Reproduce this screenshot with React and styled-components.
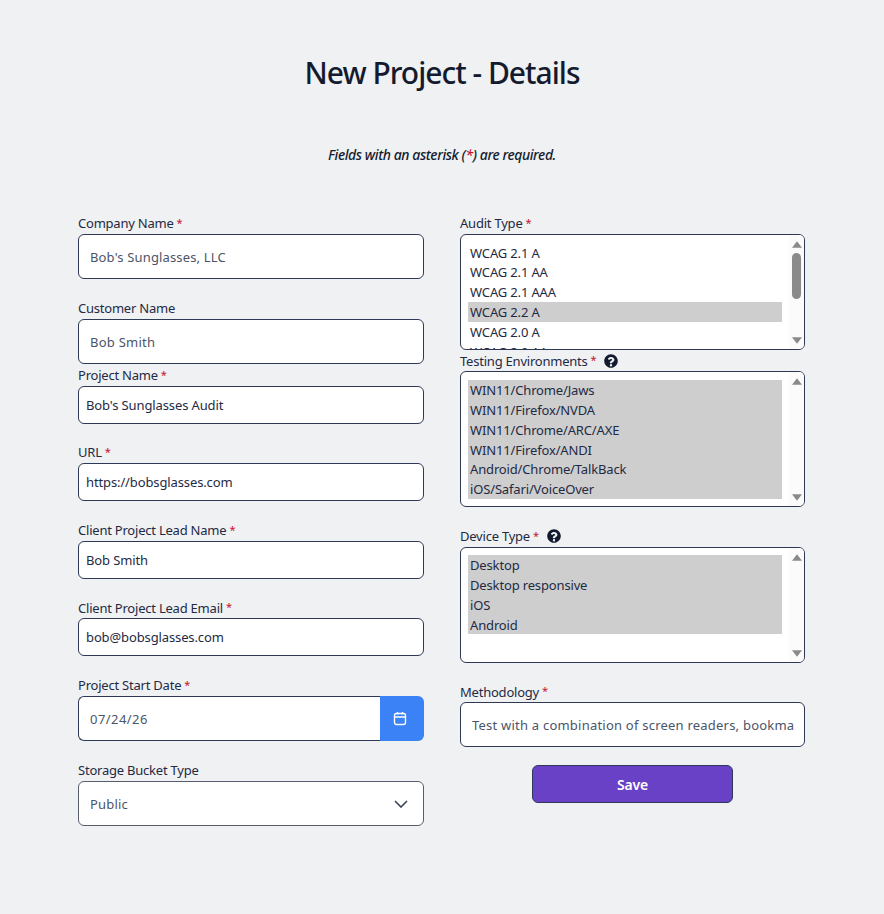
import React from "react";
import styled, { createGlobalStyle } from "styled-components";

const Global = createGlobalStyle`
  html, body { margin: 0; padding: 0; background: #eff1f3; }
  body { font-family: "Noto Sans", "Open Sans", sans-serif; color: #1f2a44; }
`;

const Page = styled.main`
  width: 884px;
  height: 914px;
  box-sizing: border-box;
  padding-top: 54px;
  overflow: hidden;
`;

const Title = styled.h1`
  margin: 0;
  text-align: center;
  font-size: 30px;
  line-height: 38px;
  font-weight: 500;
  letter-spacing: -1px;
  color: #141b2f;
`;

const Note = styled.p`
  margin: 52px 0 0;
  text-align: center;
  font-size: 14px;
  line-height: 22px;
  font-style: italic;
  font-weight: 500;
  letter-spacing: -0.42px;
  color: #141b2f;
`;

const Star = styled.span`
  color: #c8102e;
`;

const Mark = styled.span`
  color: #c8102e;
  font-size: 11px;
  margin-left: 3px;
  padding-bottom: 2px;
`;

const Form = styled.form`
  display: grid;
  grid-template-columns: 346px 345px;
  column-gap: 36px;
  padding: 46px 0 0 78px;
`;

const Column = styled.div`
  display: flex;
  flex-direction: column;
`;

const Field = styled.div`
  display: flex;
  flex-direction: column;
  margin-bottom: ${(p) => p.$after ?? 0}px;
`;

const Label = styled.label`
  display: flex;
  align-items: center;
  height: ${(p) => p.$h ?? 22}px;
  font-size: 13px;
  letter-spacing: -0.22px;
  color: #1f2a44;
`;

const Help = styled.svg`
  width: 14px;
  height: 14px;
  margin-left: 8px;
`;

const Input = styled.div`
  box-sizing: border-box;
  height: ${(p) => p.$h}px;
  display: flex;
  align-items: center;
  background: #fff;
  border: 1px solid #2e3a55;
  border-radius: 6px;
  padding: 0 ${(p) => p.$px ?? 11}px;
  font-size: 13px;
  letter-spacing: ${(p) => p.$ls ?? "-0.12px"};
  color: ${(p) => p.$color ?? "#1f2a44"};
  white-space: nowrap;
  overflow: hidden;
`;

const DateWrap = styled.div`
  display: flex;
  height: 45px;
`;

const DateInput = styled(Input)`
  flex: 1;
  border-radius: 6px 0 0 6px;
  border-right: 0;
`;

const DateBtn = styled.div`
  box-sizing: border-box;
  width: 44px;
  padding-right: 4px;
  display: flex;
  align-items: center;
  justify-content: center;
  background: #3b82f6;
  border-radius: 0 6px 6px 0;
`;

const SelectBox = styled(Input)`
  justify-content: space-between;
  border-color: #565d6d;
  padding-right: 15px;
`;

const ListBox = styled.div`
  box-sizing: border-box;
  height: ${(p) => p.$h}px;
  display: flex;
  background: #fff;
  border: 1px solid #2e3a55;
  border-radius: 6px;
  overflow: hidden;
`;

const Options = styled.div`
  flex: 1;
  padding: ${(p) => p.$pt}px 7px 0 7px;
  overflow: hidden;
`;

const Option = styled.div`
  height: 19.85px;
  line-height: 21px;
  padding-left: 2px;
  font-size: 13px;
  letter-spacing: -0.15px;
  white-space: nowrap;
  color: #1f2a44;
  background: ${(p) => (p.$sel ? "#cecece" : "transparent")};
`;

const Bar = styled.div`
  width: 15px;
  background: #fbfbfb;
  display: flex;
  flex-direction: column;
  align-items: center;
  justify-content: space-between;
  padding: 6px 0 5px;
  box-sizing: border-box;
  position: relative;
`;

const Thumb = styled.div`
  position: absolute;
  top: 18px;
  left: 3px;
  width: 9px;
  height: 46px;
  border-radius: 5px;
  background: #8a8a8a;
`;

const Arrow = styled.svg`
  width: 10px;
  height: 7px;
  fill: #8a8a8a;
`;

const Save = styled.button`
  display: block;
  width: 201px;
  height: 38px;
  margin: 18px 0 0 72px;
  background: #6941c6;
  border: 1px solid #2e3a55;
  border-radius: 6px;
  color: #fff;
  font: 600 14px "Noto Sans", sans-serif;
  letter-spacing: -0.2px;
`;

const Scroll = ({ thumb }) => (
  <Bar>
    <Arrow viewBox="0 0 11 7"><path d="M5.5 0 11 7H0z" /></Arrow>
    {thumb && <Thumb />}
    <Arrow viewBox="0 0 11 7"><path d="M0 0h11L5.5 7z" /></Arrow>
  </Bar>
);

const QuestionIcon = () => (
  <Help viewBox="0 0 512 512" fill="#111a2e">
    <path d="M256 8C119 8 8 119 8 256s111 248 248 248 248-111 248-248S393 8 256 8zm0 448a44 44 0 1 1 0-88 44 44 0 0 1 0 88zm42-139v5c0 7-5 12-12 12h-60c-7 0-12-5-12-12v-9c0-40 30-56 53-69 20-11 32-18 32-33 0-19-25-32-45-32-26 0-38 13-55 34-4 5-12 6-17 2l-36-28c-5-4-6-11-3-16 28-42 64-65 119-65 58 0 120 45 120 105 0 79-84 80-84 106z" />
  </Help>
);

const Req = () => <Mark>*</Mark>;

const audit = [
  ["WCAG 2.1 A"],
  ["WCAG 2.1 AA"],
  ["WCAG 2.1 AAA"],
  ["WCAG 2.2 A", true],
  ["WCAG 2.0 A"],
  ["WCAG 2.0 AA"],
];
const envs = [
  "WIN11/Chrome/Jaws",
  "WIN11/Firefox/NVDA",
  "WIN11/Chrome/ARC/AXE",
  "WIN11/Firefox/ANDI",
  "Android/Chrome/TalkBack",
  "iOS/Safari/VoiceOver",
];
const devices = ["Desktop", "Desktop responsive", "iOS", "Android"];

export default function App() {
  return (
    <Page>
      <Global />
      <Title>New Project - Details</Title>
      <Note>
        Fields with an asterisk (<Star>*</Star>) are required.
      </Note>
      <Form>
        <Column>
          <Field $after={18}>
            <Label>Company Name<Req /></Label>
            <Input $h={45} $color="#4b5568" $ls="0.15px">Bob's Sunglasses, LLC</Input>
          </Field>
          <Field $after={0}>
            <Label>Customer Name</Label>
            <Input $h={45} $color="#4b5568" $ls="0.25px">Bob Smith</Input>
          </Field>
          <Field $after={17}>
            <Label>Project Name<Req /></Label>
            <Input $h={38} $px={7}>Bob's Sunglasses Audit</Input>
          </Field>
          <Field $after={18}>
            <Label>URL<Req /></Label>
            <Input $h={38} $px={7}>https://bobsglasses.com</Input>
          </Field>
          <Field $after={18}>
            <Label>Client Project Lead Name<Req /></Label>
            <Input $h={38} $px={7}>Bob Smith</Input>
          </Field>
          <Field $after={18}>
            <Label $h={21}>Client Project Lead Email<Req /></Label>
            <Input $h={38} $px={7}>bob@bobsglasses.com</Input>
          </Field>
          <Field $after={18}>
            <Label>Project Start Date<Req /></Label>
            <DateWrap>
              <DateInput $h={45} $color="#4b5568" $ls="0.45px">07/24/26</DateInput>
              <DateBtn>
                <svg width="14" height="15" viewBox="0 0 14 15" fill="none" stroke="#fff" strokeWidth="1.4">
                  <rect x="1.5" y="2.5" width="11" height="11" rx="2" />
                  <path d="M1.5 6h11M4.5 1v2.5M9.5 1v2.5" />
                </svg>
              </DateBtn>
            </DateWrap>
          </Field>
          <Field>
            <Label>Storage Bucket Type</Label>
            <SelectBox $h={45} $color="#4b5568" $ls="0.2px">
              Public
              <svg width="14" height="8" viewBox="0 0 14 8" fill="none" stroke="#3a4256" strokeWidth="1.6">
                <path d="M1 1l6 6 6-6" />
              </svg>
            </SelectBox>
          </Field>
        </Column>
        <Column>
          <Field $after={0}>
            <Label>Audit Type<Req /></Label>
            <ListBox $h={116}>
              <Options $pt={7.5}>
                {audit.map(([t, s]) => <Option key={t} $sel={s}>{t}</Option>)}
              </Options>
              <Scroll thumb />
            </ListBox>
          </Field>
          <Field $after={18}>
            <Label $h={21}>Testing Environments<Req /><QuestionIcon /></Label>
            <ListBox $h={136}>
              <Options $pt={8}>
                {envs.map((t) => <Option key={t} $sel>{t}</Option>)}
              </Options>
              <Scroll />
            </ListBox>
          </Field>
          <Field $after={18}>
            <Label>Device Type<Req /><QuestionIcon /></Label>
            <ListBox $h={116}>
              <Options $pt={7}>
                {devices.map((t) => <Option key={t} $sel>{t}</Option>)}
              </Options>
              <Scroll />
            </ListBox>
          </Field>
          <Field>
            <Label $h={21}>Methodology<Req /></Label>
            <Input $h={45} $color="#4b5568" $ls="0.22px">Test with a combination of screen readers, bookma</Input>
          </Field>
          <Save type="button">Save</Save>
        </Column>
      </Form>
    </Page>
  );
}
